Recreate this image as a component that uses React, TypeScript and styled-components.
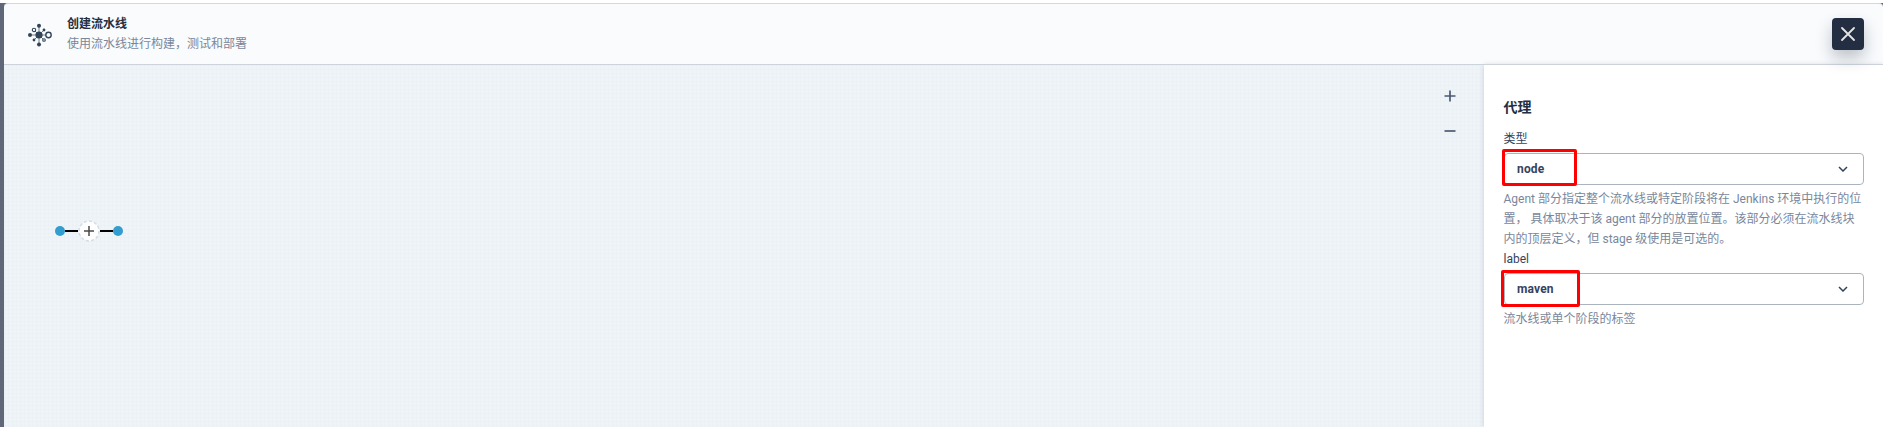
import React from 'react';
import styled, { createGlobalStyle } from 'styled-components';

const Global = createGlobalStyle`
  * { box-sizing: border-box; }
  body {
    margin: 0;
    background: #fff;
    font: 12px/20px Roboto, "Noto Sans CJK SC", sans-serif;
    color: #36435c;
    overflow: hidden;
  }
`;
const Backdrop = styled.div`
  height: 427px;
  display: flex;
  padding: 3px 0 0 4px;
  background: linear-gradient(#fff 3px, #5f6778 3px);
`;
const Dialog = styled.div`
  flex: 1;
  display: flex;
  flex-direction: column;
  border-top: 1px solid #d5d7da;
  border-radius: 4px 4px 0 0;
  overflow: hidden;
  background: #f9fbfd;
`;
const Header = styled.header`
  flex: none;
  height: 61px;
  display: flex;
  align-items: center;
  gap: 12px;
  padding: 0 19px 1px 24px;
  border-bottom: 1px solid #ccd3db;
  position: relative;
  z-index: 1;
`;
const HeaderText = styled.div`
  flex: 1;
  padding-left: 3px;
`;
const Title = styled.div`
  font-weight: 700;
  color: #242e42;
`;
const Subtitle = styled.div`
  color: #79879c;
`;
const CloseButton = styled.button`
  width: 32px;
  height: 32px;
  display: grid;
  place-items: center;
  padding: 0;
  border: 0;
  border-radius: 4px;
  background: #242e42;
  box-shadow: 0 8px 16px rgba(36, 46, 66, 0.28);
`;
const Body = styled.main`
  flex: 1;
  display: flex;
`;
const Canvas = styled.section`
  flex: 1;
  display: flex;
  justify-content: space-between;
  padding: 21px 28px 0 51px;
  background-color: #eff4f9;
  background-image: linear-gradient(#ebf1f5 1px, transparent 1px), linear-gradient(90deg, #ebf1f5 1px, transparent 1px);
  background-size: 4px 4px;
`;
const Pipeline = styled.div`
  height: 22px;
  margin-top: 134px;
  display: flex;
  align-items: center;
`;
const Dot = styled.i`
  width: 10px;
  height: 10px;
  border-radius: 50%;
  background: #329dce;
`;
const Line = styled.i`
  width: 13px;
  height: 2px;
  background: #000;
`;
const Zoom = styled.div`
  display: flex;
  flex-direction: column;
  gap: 15px;
`;
const Side = styled.aside`
  width: 399px;
  padding: 32px 19px 0 19.5px;
  background: #fff;
  box-shadow: 0 0 5px rgba(36, 46, 66, 0.2);
`;
const SideTitle = styled.h3`
  margin: 0 0 12px;
  font-size: 14px;
  line-height: 20px;
  color: #242e42;
`;
const Select = styled.div`
  height: 32px;
  margin: 4px 0 4px 0.5px;
  padding: 0 15px 0 12px;
  position: relative;
  display: flex;
  align-items: center;
  justify-content: space-between;
  border: 1px solid #abb4be;
  border-radius: 4px;
  font-weight: 700;
  letter-spacing: 0.15px;
`;
const Help = styled.div`
  color: #79879c;
`;
const Mark = styled.span<{ $x: number; $y: number; $w: number; $h: number }>`
  position: absolute;
  left: ${(p) => p.$x}px;
  top: ${(p) => p.$y}px;
  width: ${(p) => p.$w}px;
  height: ${(p) => p.$h}px;
  border: 3px solid #fe0000;
  border-radius: 2px;
`;

const LogoIcon = styled.svg`
  flex: none;
  margin-top: 3px;
`;
const Logo = () => (
  <LogoIcon width="24" height="24" viewBox="0 0 24 24" fill="#324558" stroke="#324558">
    <path d="M11 3v18M2 12h16M6 7l9 9M6 17l10-10" strokeWidth="1" opacity=".7" />
    <g stroke="none">
      <circle cx="11" cy="12" r="3.6" /><circle cx="11" cy="2.7" r="2" />
      <circle cx="11" cy="21.5" r="2" /><circle cx="2" cy="12" r="2" />
      <circle cx="16" cy="7" r="1.4" /><circle cx="6" cy="17" r="1.4" />
    </g>
    <g fill="#f9fbfd">
      <circle cx="6" cy="7" r="1.7" strokeWidth="1.1" />
      <circle cx="16" cy="17" r="1.3" strokeWidth="1.1" />
      <circle cx="20.5" cy="12" r="2.7" strokeWidth="1.4" />
    </g>
  </LogoIcon>
);
const Plus = () => (
  <svg width="12" height="20" viewBox="0 0 12 20"><path d="M6 4.5v11M.5 10h11" stroke="#4a5974" strokeWidth="1.7" /></svg>
);
const Minus = () => (
  <svg width="12" height="20" viewBox="0 0 12 20"><path d="M.5 10h11" stroke="#667386" strokeWidth="2" /></svg>
);
const AddNode = () => (
  <svg width="22" height="22" viewBox="0 0 22 22">
    <circle cx="11" cy="11" r="10" fill="#fff" stroke="#d5dce4" strokeWidth="1.5" strokeDasharray="3 2.2" />
    <path d="M11 6v10M6 11h10" stroke="#4a4a4a" strokeWidth="1.5" />
  </svg>
);
const Chevron = () => (
  <svg width="10" height="6" viewBox="0 0 10 6"><path d="M1 1l4 4 4-4" fill="none" stroke="#324558" strokeWidth="1.5" /></svg>
);

export default function App() {
  return (
    <Backdrop>
      <Global />
      <Dialog>
        <Header>
          <Logo />
          <HeaderText>
            <Title>创建流水线</Title>
            <Subtitle>使用流水线进行构建，测试和部署</Subtitle>
          </HeaderText>
          <CloseButton aria-label="关闭">
            <svg width="14" height="14" viewBox="0 0 14 14"><path d="M1 1l12 12M13 1L1 13" stroke="#e4e6e3" strokeWidth="1.8" strokeLinecap="round" /></svg>
          </CloseButton>
        </Header>
        <Body>
          <Canvas>
            <Pipeline><Dot /><Line /><AddNode /><Line /><Dot /></Pipeline>
            <Zoom><Plus /><Minus /></Zoom>
          </Canvas>
          <Side>
            <SideTitle>代理</SideTitle>
            <div>类型</div>
            <Select>node<Chevron /><Mark $x={-3} $y={-5} $w={75} $h={37} /></Select>
            <Help>Agent 部分指定整个流水线或特定阶段将在 Jenkins 环境中执行的位置， 具体取决于该 agent 部分的放置位置。该部分必须在流水线块内的顶层定义，但 stage 级使用是可选的。</Help>
            <div>label</div>
            <Select>maven<Chevron /><Mark $x={-4} $y={-4} $w={79} $h={37} /></Select>
            <Help>流水线或单个阶段的标签</Help>
          </Side>
        </Body>
      </Dialog>
    </Backdrop>
  );
}
